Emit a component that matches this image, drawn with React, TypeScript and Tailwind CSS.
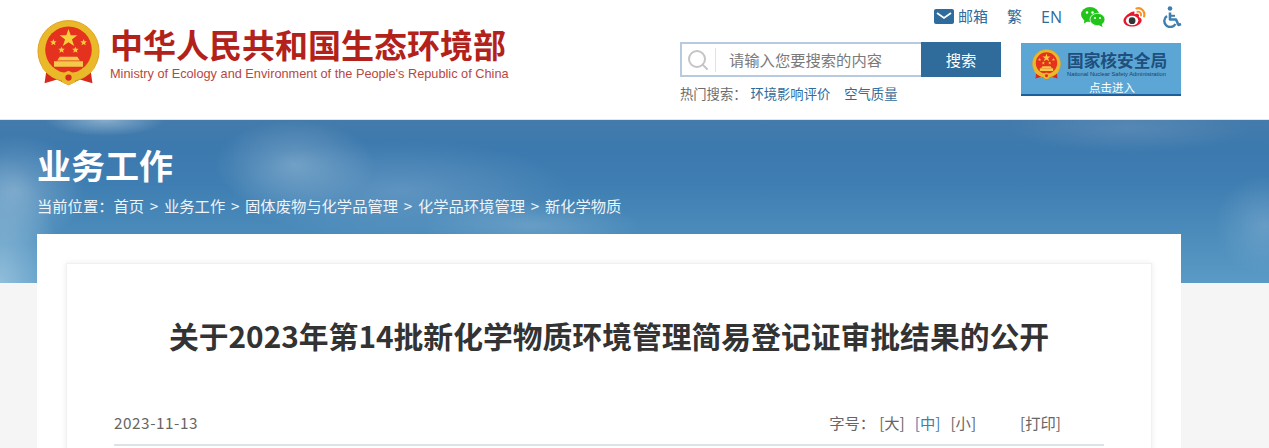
import { Search } from "lucide-react";

const cjk = "font-['Noto_Sans_CJK_SC','Liberation_Sans',sans-serif]";

function Emblem({ className }: { className: string }) {
  const smallStars = [
    [26, 35],
    [74, 35],
    [39, 47],
    [61, 47],
  ];
  return (
    <svg viewBox="0 0 100 104" className={className}>
      <path d="M16 72 L12 100 L32 94 L50 103 L68 94 L88 100 L84 72 Z" fill="#d9281e" />
      <circle cx="50" cy="49" r="48.500" fill="#eab92a" />
      <circle cx="50" cy="49" r="48.500" fill="none" stroke="#dc9f20" strokeWidth="1.500" />
      <circle cx="50" cy="47" r="37" fill="#e5321f" />
      <polygon points="50,14 53.500,24 64,24 55.500,30.500 59,41 50,35 41,41 44.500,30.500 36,24 46.500,24" fill="#f6cf3a" />
      {smallStars.map(([x, y]) => (
        <polygon
          key={`${x}-${y}`}
          transform={`translate(${x} ${y}) scale(0.42)`}
          points="0,-12 3.500,-3.700 12,-3.700 5.500,2.500 8,11 0,6 -8,11 -5.500,2.500 -12,-3.700 -3.500,-3.700"
          fill="#f6cf3a"
        />
      ))}
      <path d="M36 58 H64 L68 64 H32 Z M27 65 H73 V74 H27 Z" fill="#f3c94a" />
      <path d="M14 68 Q24 84 50 84 Q76 84 86 68 L92 76 Q76 96 50 96 Q24 96 8 76 Z" fill="#eab92a" />
      <path d="M37 86 L50 80 L63 86 L60 99 L50 103 L40 99 Z" fill="#eab92a" />
      <circle cx="50" cy="91" r="5" fill="#d9281e" />
    </svg>
  );
}

function MailIcon() {
  return (
    <svg viewBox="0 0 20 15" className="h-[15px] w-5">
      <rect width="20" height="15" rx="2" fill="#2f6b9b" />
      <path d="M3 4 L10 9 L17 4" fill="none" stroke="#fff" strokeWidth="1.800" />
    </svg>
  );
}

function WechatIcon() {
  return (
    <svg viewBox="0 0 24 20" className="h-5 w-6">
      <ellipse cx="9" cy="7.500" rx="9" ry="7.500" fill="#22c41a" />
      <path d="M3.500 11 L3 16.500 L8 13.500 Z" fill="#22c41a" />
      <ellipse cx="16.500" cy="12.500" rx="7.500" ry="6.200" fill="#22c41a" stroke="#fff" strokeWidth="0.800" />
      <path d="M20.500 16 L21.500 20 L17.500 18 Z" fill="#22c41a" />
      <circle cx="6" cy="5.500" r="1.200" fill="#fff" />
      <circle cx="11.500" cy="5.500" r="1.200" fill="#fff" />
      <circle cx="14" cy="11" r="1" fill="#fff" />
      <circle cx="19" cy="11" r="1" fill="#fff" />
    </svg>
  );
}

function WeiboIcon() {
  return (
    <svg viewBox="0 0 24 22" className="h-[21px] w-[23px]">
      <path
        d="M10 6 C4 8 0 13 0.500 16 C1 20 6 22 11 21.500 C16 21 19.500 18 19.500 15 C19.500 13 18 12 16.500 11.500 C17.500 9 16 7.500 13 8.500 C12 9 11.500 8.500 12 7 C12 5.500 11.500 5.500 10 6 Z"
        fill="#e6162d"
      />
      <ellipse cx="9.500" cy="15.200" rx="6.500" ry="5" fill="#fff" />
      <circle cx="9.500" cy="15.400" r="3.500" fill="#333" />
      <path d="M14 2.500 C19 1 23.500 5.500 22 11" fill="none" stroke="#f7931e" strokeWidth="2.200" strokeLinecap="round" />
      <path d="M15 6 C17.500 5.500 19.500 7.500 18.800 10" fill="none" stroke="#f7931e" strokeWidth="2" strokeLinecap="round" />
    </svg>
  );
}

function AccessIcon() {
  return (
    <svg viewBox="0 0 20 22" className="mr-[-1px] h-[22px] w-5">
      <circle cx="8" cy="2.500" r="2.300" fill="#3f7eae" />
      <path
        d="M8 6.500 V13.500 H14 L16.500 19 L19 18"
        fill="none"
        stroke="#3f7eae"
        strokeWidth="2.600"
        strokeLinejoin="round"
      />
      <path d="M8 9.800 H13" fill="none" stroke="#3f7eae" strokeWidth="2" />
      <path d="M5 10 A6 6 0 1 0 13.500 18" fill="none" stroke="#3f7eae" strokeWidth="2.400" />
    </svg>
  );
}

function Header() {
  return (
    <header className="flex h-[119px] justify-between pl-[37px] pr-[88px]">
      <div className="flex items-start pt-[20px]">
        <Emblem className="h-[66px] w-[63px]" />
        <div className="ml-[10px] flex flex-col">
          <span className={`${cjk} mt-[2px] text-[33px] font-bold leading-[44px] text-[#b3221a]`}>
            中华人民共和国生态环境部
          </span>
          <span className="mt-[1px] font-['Liberation_Sans',sans-serif] text-[12.750px] leading-[14px] text-[#b8483e]">
            Ministry of Ecology and Environment of the People's Republic of China
          </span>
        </div>
      </div>
      <div className={`${cjk} flex flex-col items-end`}>
        <div className="flex h-[32px] items-center pt-[1px] text-[15px] text-[#2f6b9b]">
          <MailIcon />
          <span className="ml-[4px]">邮箱</span>
          <span className="ml-[19px]">繁</span>
          <span className="ml-[19px] font-['Open_Sans',sans-serif] text-[16px]">EN</span>
          <span className="ml-[19px]">
            <WechatIcon />
          </span>
          <span className="ml-[18px]">
            <WeiboIcon />
          </span>
          <span className="ml-[16px]">
            <AccessIcon />
          </span>
        </div>
        <div className="mt-[10px] flex items-start gap-[20px]">
          <div>
            <div className="flex h-[35px] w-[321px]">
              <div className="flex flex-1 items-center border-2 border-r-0 border-[#b7cadf] bg-white">
                <Search className="ml-[4px] size-[24px] text-[#c4c4c4]" strokeWidth={2} />
                <span className="ml-[5px] h-[24px] w-px bg-[#e2e2e2]" />
                <span className="ml-[13px] text-[15.300px] text-[#7a7a7a]">请输入您要搜索的内容</span>
              </div>
              <button className="w-[80px] bg-[#2f6b9b] text-[15.300px] text-white">搜索</button>
            </div>
            <div className="mt-[7px] flex text-[13.300px] leading-[20px] text-[#6c6c6c]">
              <span>热门搜索：</span>
              <a className="ml-[4px] text-[#2f6b9b]">环境影响评价</a>
              <a className="ml-[14px] text-[#2f6b9b]">空气质量</a>
            </div>
          </div>
          <div className="mt-[1px] flex h-[53px] w-[160px] flex-col border-b-2 border-[#1d5f9c] bg-[#5ba6d5]">
            <div className="flex flex-1 pl-[11px] pt-[6px]">
              <Emblem className="h-[31px] w-[29px]" />
              <div className="ml-[6px] flex flex-col">
                <span className="text-[16.700px] font-bold leading-[22px] text-[#1f4f7c]">国家核安全局</span>
                <span className="font-['Liberation_Sans',sans-serif] text-[5.800px] leading-[6px] text-[#1f3f63]">
                  National Nuclear Safety Administration
                </span>
              </div>
            </div>
            <span className="pb-[3px] pl-[22px] text-center text-[11.500px] leading-[14px] text-white">点击进入</span>
          </div>
        </div>
      </div>
    </header>
  );
}

function Banner() {
  const crumbs = ["首页", "业务工作", "固体废物与化学品管理", "化学品环境管理", "新化学物质"];
  return (
    <section className="h-[164px] border-t border-[#dfe7ee] bg-[radial-gradient(ellipse_60px_16px_at_105px_0px,rgba(200,220,235,0.5),transparent),radial-gradient(ellipse_70px_55px_at_15px_70px,rgba(190,215,230,0.4),transparent),radial-gradient(ellipse_60px_130px_at_0px_165px,rgba(190,220,235,0.55),transparent),radial-gradient(ellipse_80px_45px_at_295px_45px,rgba(170,200,220,0.45),transparent),radial-gradient(ellipse_170px_50px_at_400px_70px,rgba(170,200,225,0.28),transparent),radial-gradient(ellipse_110px_25px_at_530px_105px,rgba(170,205,225,0.3),transparent),radial-gradient(ellipse_120px_25px_at_1130px_8px,rgba(150,175,205,0.25),transparent),radial-gradient(ellipse_50px_50px_at_1265px_105px,rgba(170,200,225,0.3),transparent),linear-gradient(to_bottom,#437bab_0%,#3c79ae_18%,#3f7eb2_40%,#4c8dbc_72%,#5a9ac6_100%)] pl-[37px] text-white">
      <h2 className={`${cjk} pt-[20px] text-[34px] font-bold leading-[50px]`}>业务工作</h2>
      <div className={`${cjk} mt-[3px] flex text-[15.300px] leading-[24px] text-[#eef4f9]`}>
        <span>当前位置：</span>
        {crumbs.map((c, i) => (
          <span key={c} className="flex">
            {i > 0 && <span className="mx-[5.700px]">&gt;</span>}
            {c}
          </span>
        ))}
      </div>
    </section>
  );
}

function Article() {
  return (
    <main className="mx-[37px] mt-[-49px] w-[1144px] bg-white px-[29px] pt-[29px]">
      <div className={`${cjk} h-[300px] border border-[#f0f0f0] bg-white px-[47px] shadow-[0_0_6px_rgba(0,0,0,0.08)]`}>
        <h1 className="pt-[49px] text-center text-[29.800px] font-bold leading-[44px] text-[#333333]">
          关于2023年第14批新化学物质环境管理简易登记证审批结果的公开
        </h1>
        <div className="mt-[53px] flex items-center justify-between border-b-2 border-[#dbe3ea] pb-[10px] text-[15.300px] leading-[24px] text-[#666666]">
          <span className="tracking-[0.550px]">2023-11-13</span>
          <div className="mr-[43px] flex">
            <span className="mr-[4px]">字号：</span>
            <span>[大]</span>
            <span className="ml-[10px] text-[#3f7eae]">[中]</span>
            <span className="ml-[10px]">[小]</span>
            <span className="ml-[44px]">[打印]</span>
          </div>
        </div>
      </div>
    </main>
  );
}

export default function App() {
  return (
    <div className="h-[448px] overflow-hidden bg-[#f5f5f5]">
      <div className="bg-white">
        <Header />
      </div>
      <Banner />
      <Article />
    </div>
  );
}
